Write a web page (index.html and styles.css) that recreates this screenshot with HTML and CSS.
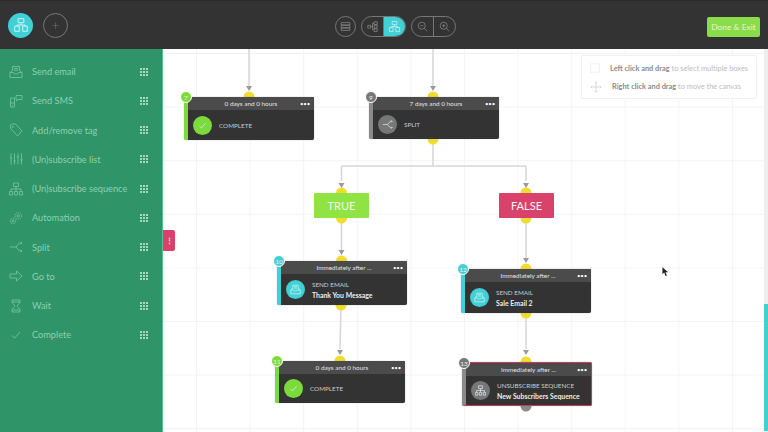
FILE: index.html
```html
<!doctype html>
<html lang="en">
  <head>
    <meta charset="UTF-8" />
    <title>Sequence Builder</title>
    <link rel="stylesheet" href="styles.css">
  </head>
  <body>
    <svg class="defs" width="0" height="0">
      <symbol id="i-email" viewBox="0 0 14 14">
        <path d="M3.5 6V1.5h7V6M1 7.5 3.5 5.5M13 7.5 10.500 5.500M1 7.500h3.500l1 1.500h3l1-1.500H13v5H1zM5 3.500h4M5 5.200h4" />
      </symbol>
      <symbol id="i-sms" viewBox="0 0 14 14">
        <path d="M7 1.500h6v4H9L7.500 6.800V5.500H7zM5.500 4H1.500v5M1.500 9h4V4M1.500 8.500v4.500h4V9M3 11.200h1" />
      </symbol>
      <symbol id="i-tag" viewBox="0 0 14 14">
        <path d="M1 2.500 3 1h3.500l6.500 7-4.500 5-6.500-7zM3.500 3.500h.8v.8h-.8z" />
      </symbol>
      <symbol id="i-list" viewBox="0 0 14 14">
        <path d="M2 1.500v11M5.500 1.500v11M9 1.500v11M12.500 1.500v11M.8 6h2.400M4.300 9h2.400M7.800 5h2.400M11.300 8h2.400" />
      </symbol>
      <symbol id="i-seq" viewBox="0 0 14 14">
        <path d="M4.500 1h5v3.500h-5zM7 4.500V7M2 9V7h10v2M7 7v2M.5 9.500h3V13h-3zM5.500 9.500h3V13h-3zM10.500 9.500h3V13h-3z" />
      </symbol>
      <symbol id="i-auto" viewBox="0 0 14 14">
        <circle cx="9.200" cy="4.800" r="3.300" stroke-dasharray="1.500 .6" />
        <circle cx="9.200" cy="4.800" r="1.200" />
        <circle cx="4" cy="10" r="2.800" stroke-dasharray="1.300 .5" />
        <circle cx="4" cy="10" r="1" />
      </symbol>
      <symbol id="i-split" viewBox="0 0 14 14">
        <path d="M1 7h6l3.500-4H13M7 7l3.500 4H13M11.800 1.800 13 3l-1.200 1.200M11.800 9.800 13 11l-1.200 1.200" />
      </symbol>
      <symbol id="i-goto" viewBox="0 0 14 14">
        <path d="M1 5h6.500V2L13 7l-5.500 5V9H1z" />
      </symbol>
      <symbol id="i-wait" viewBox="0 0 14 14">
        <path d="M3 1h8v2.500L8 7l3 3.500V13H3v-2.500L6 7 3 3.500zM3 3h8M3 11h8" />
      </symbol>
      <symbol id="i-check" viewBox="0 0 14 14">
        <path d="M3 7.500 5.800 10 11 4" />
      </symbol>
      <symbol id="i-tree" viewBox="0 0 14 14">
        <path d="M4.500 1.500h5v3.500h-5zM7 5v2M1.500 8h4v4.500h-4zM8.500 8h4v4.500h-4zM3.500 8V7h7v1" />
      </symbol>
      <symbol id="i-grid" viewBox="0 0 8 8">
        <path class="fill" d="M0 0h2v2H0zM3 0h2v2H3zM6 0h2v2H6zM0 3h2v2H0zM3 3h2v2H3zM6 3h2v2H6zM0 6h2v2H0zM3 6h2v2H3zM6 6h2v2H6z" />
      </symbol>
    </svg>

    <div class="page">
      <header class="topbar">
        <div class="top-left">
          <button class="round round-teal"><svg class="ico-16"><use href="#i-tree" /></svg></button>
          <button class="round round-plus">+</button>
        </div>
        <div class="top-tools">
          <button class="tool-one">
            <svg class="ico-12" viewBox="0 0 14 14"><path d="M1.500 2h11v3h-11zM1.500 5.500h11v3h-11zM1.500 9h11v3h-11z" /></svg>
          </button>
          <div class="tool-pill">
            <button class="tool-seg">
              <svg class="ico-12" viewBox="0 0 14 14"><path d="M1 5.500h3.500v3.500H1zM9 1h4v3.500H9zM9 5.500h4V9H9zM9 10h4v3.500H9zM4.500 7H7M7 3v8M7 3h2M7 11h2" /></svg>
            </button>
            <button class="tool-seg tool-on"><svg class="ico-13"><use href="#i-tree" /></svg></button>
          </div>
          <div class="tool-pill">
            <button class="tool-seg">
              <svg class="ico-12" viewBox="0 0 14 14"><circle cx="6" cy="6" r="4.500" /><path d="M9.300 9.300 13 13M4 6h4" /></svg>
            </button>
            <button class="tool-seg">
              <svg class="ico-12" viewBox="0 0 14 14"><circle cx="6" cy="6" r="4.500" /><path d="M9.300 9.300 13 13M4 6h4M6 4v4" /></svg>
            </button>
          </div>
        </div>
        <button class="done-btn">Done &amp; Exit</button>
      </header>

      <div class="main">
        <aside class="sidebar">
          <div class="side-item"><svg class="side-ico"><use href="#i-email" /></svg><span class="side-label">Send email</span><svg class="side-grip"><use href="#i-grid" /></svg></div>
          <div class="side-item"><svg class="side-ico"><use href="#i-sms" /></svg><span class="side-label">Send SMS</span><svg class="side-grip"><use href="#i-grid" /></svg></div>
          <div class="side-item"><svg class="side-ico"><use href="#i-tag" /></svg><span class="side-label">Add/remove tag</span><svg class="side-grip"><use href="#i-grid" /></svg></div>
          <div class="side-item"><svg class="side-ico"><use href="#i-list" /></svg><span class="side-label">(Un)subscribe list</span><svg class="side-grip"><use href="#i-grid" /></svg></div>
          <div class="side-item"><svg class="side-ico"><use href="#i-seq" /></svg><span class="side-label">(Un)subscribe sequence</span><svg class="side-grip"><use href="#i-grid" /></svg></div>
          <div class="side-item"><svg class="side-ico"><use href="#i-auto" /></svg><span class="side-label">Automation</span><svg class="side-grip"><use href="#i-grid" /></svg></div>
          <div class="side-item"><svg class="side-ico"><use href="#i-split" /></svg><span class="side-label">Split</span><svg class="side-grip"><use href="#i-grid" /></svg></div>
          <div class="side-item"><svg class="side-ico"><use href="#i-goto" /></svg><span class="side-label">Go to</span><svg class="side-grip"><use href="#i-grid" /></svg></div>
          <div class="side-item"><svg class="side-ico"><use href="#i-wait" /></svg><span class="side-label">Wait</span><svg class="side-grip"><use href="#i-grid" /></svg></div>
          <div class="side-item"><svg class="side-ico"><use href="#i-check" /></svg><span class="side-label">Complete</span><svg class="side-grip"><use href="#i-grid" /></svg></div>
        </aside>

        <section class="canvas">
          <!-- connectors use page coordinates -->
          <svg class="wires" viewBox="163 49 605 383">
            <g class="lines">
              <path d="M249 49V88M433 49V88M433 139V166M341.500 166H526M341.500 166V181M526 166V181" />
              <path d="M341.500 218V250M526 218V258M341 305 340 349M526 313V349" />
            </g>
            <g class="dots">
              <circle cx="249" cy="97" r="5.500" />
              <circle cx="433" cy="97" r="5.500" />
              <circle cx="433" cy="139" r="5.500" />
              <circle cx="341.500" cy="193" r="5.500" />
              <circle cx="526" cy="193" r="5.500" />
              <circle cx="341.500" cy="218" r="5.500" />
              <circle cx="526" cy="218" r="5.500" />
              <circle cx="341.500" cy="261" r="5.500" />
              <circle cx="526" cy="269" r="5.500" />
              <circle cx="341" cy="305" r="5.500" />
              <circle cx="526" cy="313" r="5.500" />
              <circle cx="340" cy="361" r="5.500" />
              <circle cx="526" cy="362" r="5.500" />
              <circle class="dot-grey" cx="526" cy="406" r="5.500" />
            </g>
            <g class="heads">
              <path d="M246 86h6l-3 5zM430 86h6l-3 5zM338.500 183h6l-3 5zM523 183h6l-3 5zM338.500 250h6l-3 5zM523 258h6l-3 5zM337 350h6l-3 5zM523 350h6l-3 5z" />
            </g>
          </svg>

          <div class="hints">
            <div class="hint">
              <svg class="hint-ico" viewBox="0 0 14 14"><path class="dash" d="M1 1h12v12H1z" /></svg>
              <span><b>Left click and drag</b> to select multiple boxes</span>
            </div>
            <div class="hint">
              <svg class="hint-ico" viewBox="0 0 14 14"><path d="M7 1v12M1 7h12M5.500 2.500 7 1l1.500 1.500M5.500 11.500 7 13l1.500-1.500M2.500 5.500 1 7l1.500 1.500M11.500 5.500 13 7l-1.500 1.500" /></svg>
              <span><b>Right click and drag</b> to move the canvas</span>
            </div>
          </div>

          <div class="side-tab">⋮</div>

          <article class="node accent-green pos-7">
            <span class="badge">7</span>
            <div class="node-head"><span></span><span>0 days and 0 hours</span><span class="more">•••</span></div>
            <div class="node-body">
              <span class="node-ico"><svg class="ico-11"><use href="#i-check" /></svg></span>
              <div class="node-text"><span class="node-type">COMPLETE</span></div>
            </div>
          </article>

          <article class="node accent-grey pos-9">
            <span class="badge">9</span>
            <div class="node-head"><span></span><span>7 days and 0 hours</span><span class="more">•••</span></div>
            <div class="node-body">
              <span class="node-ico"><svg class="ico-11"><use href="#i-split" /></svg></span>
              <div class="node-text"><span class="node-type">SPLIT</span></div>
            </div>
          </article>

          <div class="branch branch-true">TRUE</div>
          <div class="branch branch-false">FALSE</div>

          <article class="node accent-teal pos-10">
            <span class="badge">10</span>
            <div class="node-head"><span></span><span>Immediately after ...</span><span class="more">•••</span></div>
            <div class="node-body">
              <span class="node-ico"><svg class="ico-11"><use href="#i-email" /></svg></span>
              <div class="node-text"><span class="node-type">SEND EMAIL</span><span class="node-title">Thank You Message</span></div>
            </div>
          </article>

          <article class="node accent-teal pos-12">
            <span class="badge">12</span>
            <div class="node-head"><span></span><span>Immediately after ...</span><span class="more">•••</span></div>
            <div class="node-body">
              <span class="node-ico"><svg class="ico-11"><use href="#i-email" /></svg></span>
              <div class="node-text"><span class="node-type">SEND EMAIL</span><span class="node-title">Sale Email 2</span></div>
            </div>
          </article>

          <article class="node accent-green pos-11">
            <span class="badge">11</span>
            <div class="node-head"><span></span><span>0 days and 0 hours</span><span class="more">•••</span></div>
            <div class="node-body">
              <span class="node-ico"><svg class="ico-11"><use href="#i-check" /></svg></span>
              <div class="node-text"><span class="node-type">COMPLETE</span></div>
            </div>
          </article>

          <article class="node accent-grey node-selected pos-13">
            <span class="badge">13</span>
            <div class="node-head"><span></span><span>Immediately after ...</span><span class="more">•••</span></div>
            <div class="node-body">
              <span class="node-ico"><svg class="ico-11"><use href="#i-seq" /></svg></span>
              <div class="node-text"><span class="node-type">UNSUBSCRIBE SEQUENCE</span><span class="node-title">New Subscribers Sequence</span></div>
            </div>
          </article>

          <div class="scroll-track"><div class="scroll-thumb"></div></div>

          <svg class="cursor" viewBox="0 0 8 11"><path d="M.5 0v8l2-1.800L4 10l1.600-.6L4 5.800l3 0z" /></svg>
        </section>
      </div>
    </div>
  </body>
</html>
```

FILE: styles.css
```css
* {
  box-sizing: border-box;
}
html,
body {
  margin: 0;
  height: 100%;
  overflow: hidden;
}
body {
  font-family: Lato, "Open Sans", sans-serif;
  background: #fff;
}
button {
  font-family: inherit;
  padding: 0;
  border: none;
  background: none;
  color: inherit;
}
svg {
  fill: none;
  stroke: currentColor;
  stroke-width: 0.8;
}
.fill {
  fill: currentColor;
  stroke: none;
}
.defs {
  position: absolute;
}
.page {
  display: flex;
  flex-direction: column;
  height: 432px;
  filter: blur(0.5px);
}

/* top bar */
.topbar {
  display: flex;
  align-items: center;
  height: 49px;
  padding: 0 8px;
  background: #333;
  border-top: 1px solid #2a2a2a;
  position: relative;
}
.top-left {
  display: flex;
  gap: 10px;
}
.round {
  display: flex;
  align-items: center;
  justify-content: center;
  width: 25px;
  height: 25px;
  border-radius: 50%;
}
.round-teal {
  background: #41d0d6;
  color: #d8f6f6;
}
.round-plus {
  border: 1px solid #777;
  color: #777;
  font-size: 13px;
  font-weight: 300;
}
.ico-16 {
  width: 16px;
  height: 16px;
}
.ico-13 {
  width: 13px;
  height: 13px;
}
.ico-12 {
  width: 11px;
  height: 11px;
}
.ico-11 {
  width: 11px;
  height: 11px;
}
.top-tools {
  display: flex;
  align-items: center;
  gap: 5px;
  margin: 3px 0 0 267px;
  color: #999;
}
.tool-one {
  display: flex;
  align-items: center;
  justify-content: center;
  width: 21px;
  height: 21px;
  border: 1px solid #777;
  border-radius: 50%;
}
.tool-pill {
  display: flex;
  width: 45px;
  height: 21px;
  border: 1px solid #777;
  border-radius: 11px;
  overflow: hidden;
}
.tool-seg {
  flex: 1;
  display: flex;
  align-items: center;
  justify-content: center;
}
.tool-seg + .tool-seg {
  border-left: 1px solid #777;
}
.tool-on {
  background: #41d0d6;
  color: #c9f3f3;
  border-left: none;
}
.done-btn {
  margin: 3px 0 0 auto;
  width: 53px;
  height: 20px;
  background: #8bdc4a;
  color: #e6f5d5;
  font-size: 8.4px;
  border-radius: 2px;
}

/* left panel */
.main {
  flex: 1;
  display: flex;
  min-height: 0;
}
.sidebar {
  width: 163px;
  padding-top: 8px;
  background: #2f9468;
  border-right: 1px solid #56c08f;
  color: #8ed0ae;
}
.side-item {
  display: flex;
  align-items: center;
  height: 29.25px;
  padding-left: 9px;
}
.side-ico {
  width: 14px;
  height: 14px;
  margin-right: 9px;
  color: #7cc7a2;
}
.side-label {
  flex: 1;
  font-size: 9.2px;
}
.side-grip {
  width: 8px;
  height: 8px;
  margin-right: 14px;
  color: #a5dabf;
}

/* canvas */
.canvas {
  flex: 1;
  position: relative;
  overflow: hidden;
  background-color: #fff;
  background-image: linear-gradient(#f4f4f4 1px, transparent 1px), linear-gradient(90deg, #f4f4f4 1px, transparent 1px);
  background-size: 53.6px 53.6px;
  background-position: 33px 4px;
}
.wires {
  position: absolute;
  left: 0;
  top: 0;
  width: 605px;
  height: 383px;
}
.dots {
  fill: #f0dc2e;
  stroke: none;
}
.dot-grey {
  fill: #8a8a8a;
}
.lines {
  stroke: #d6d6d6;
  stroke-width: 1.500;
}
.heads {
  fill: #9a9a9a;
  stroke: none;
}
.hints {
  position: absolute;
  left: 418px;
  top: 6px;
  width: 176px;
  height: 44px;
  padding: 3px 8px;
  border: 1px solid #f1f1f1;
  border-radius: 2px;
  background: #fff;
  font-size: 7.4px;
  color: #bcbcbc;
}
.hint {
  display: flex;
  align-items: center;
  gap: 10px;
  height: 18.5px;
  white-space: nowrap;
}
.hint b {
  color: #8a8a8a;
}
.hint-ico {
  width: 12px;
  height: 12px;
  color: #ccc;
}
.dash {
  stroke-dasharray: 1 1;
}
.side-tab {
  position: absolute;
  left: 0;
  top: 181px;
  width: 12px;
  height: 21px;
  display: flex;
  align-items: center;
  justify-content: center;
  background: #d9436b;
  border-radius: 0 2px 2px 0;
  color: #eee;
  font-size: 7px;
  font-weight: 700;
}

/* nodes */
.node {
  position: absolute;
  width: 130px;
  display: flex;
  flex-direction: column;
  background: #333;
  border-left: 4px solid;
  border-radius: 2px;
  box-shadow: 0 0 1px #777;
  color: #ddd;
}
.accent-green {
  border-left-color: #7cdb3c;
}
.accent-grey {
  border-left-color: #8a8a8a;
}
.accent-teal {
  border-left-color: #41d0d6;
}
.node-selected {
  border-top: 1px solid #c9395f;
  border-right: 1px solid #c9395f;
  border-bottom: 1px solid #c9395f;
}
.pos-7 {
  left: 21px;
  top: 48px;
  height: 43px;
}
.pos-9 {
  left: 206px;
  top: 48px;
  height: 42px;
}
.pos-10 {
  left: 114px;
  top: 212px;
  height: 44px;
}
.pos-12 {
  left: 298px;
  top: 220px;
  height: 44px;
}
.pos-11 {
  left: 112px;
  top: 312px;
  height: 42px;
}
.pos-13 {
  left: 299px;
  top: 313px;
  height: 44px;
}
.badge {
  position: absolute;
  left: -8px;
  top: -6px;
  width: 12px;
  height: 12px;
  display: flex;
  align-items: center;
  justify-content: center;
  border: 1px solid #fff;
  border-radius: 50%;
  font-size: 6.5px;
  color: #eee;
  z-index: 1;
}
.accent-green .badge {
  background: #7cdb3c;
}
.accent-grey .badge {
  background: #777;
}
.accent-teal .badge {
  background: #41d0d6;
}
.node-head {
  display: grid;
  grid-template-columns: 18px 1fr 18px;
  align-items: center;
  height: 13px;
  flex: none;
  background: #4b4b4b;
  font-size: 6.4px;
  text-align: center;
  color: #e4e4e4;
}
.more {
  font-size: 6px;
  letter-spacing: -0.2px;
  color: #fff;
}
.node-body {
  flex: 1;
  display: flex;
  align-items: center;
  padding-left: 4.5px;
}
.node-ico {
  flex: none;
  display: flex;
  align-items: center;
  justify-content: center;
  width: 19px;
  height: 19px;
  margin-right: 7.5px;
  border-radius: 50%;
  color: #e8f8f8;
}
.accent-green .node-ico {
  background: #7cdb3c;
}
.accent-grey .node-ico {
  background: #777;
}
.accent-teal .node-ico {
  background: #41d0d6;
}
.node-text {
  display: flex;
  flex-direction: column;
  gap: 3px;
}
.node-type {
  font-size: 6.3px;
  color: #ccc;
}
.node-title {
  font-size: 6.9px;
  font-weight: 700;
  color: #eee;
}
.branch {
  position: absolute;
  top: 144px;
  width: 55px;
  height: 25px;
  display: flex;
  align-items: center;
  justify-content: center;
  border-radius: 1px;
  color: #f4f4f4;
  font-size: 11px;
}
.branch-true {
  left: 151px;
  background: #8fe345;
}
.branch-false {
  left: 336px;
  background: #d9436b;
}
.scroll-track {
  position: absolute;
  right: 0;
  top: 0;
  width: 4px;
  height: 382px;
  background: #eee;
}
.scroll-thumb {
  margin-top: 255px;
  height: 127px;
  background: #41d0d6;
}
.cursor {
  position: absolute;
  left: 499px;
  top: 218px;
  width: 7px;
  height: 10px;
  fill: #222;
  stroke: none;
}
```
